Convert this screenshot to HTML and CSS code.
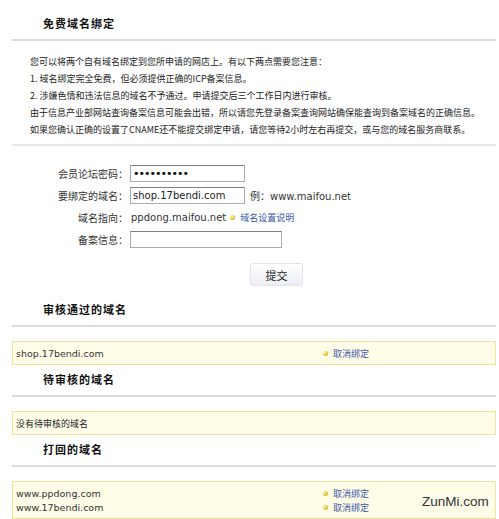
FILE: index.html
```html
<!DOCTYPE html>
<html>
<head>
    <meta charset="UTF-8">
    <title>免费域名绑定</title>
    <link rel="stylesheet" href="styles.css">
</head>
<body>
    <div class="wrap">
        <h2 class="box-title first">免费域名绑定</h2>

        <div class="notice">
            <p>您可以将两个自有域名绑定到您所申请的网店上。有以下两点需要您注意：</p>
            <p>1. 域名绑定完全免费，但必须提供正确的ICP备案信息。</p>
            <p>2. 涉嫌色情和违法信息的域名不予通过。申请提交后三个工作日内进行审核。</p>
            <p>由于信息产业部网站查询备案信息可能会出错，所以请您先登录备案查询网站确保能查询到备案域名的正确信息。</p>
            <p>如果您确认正确的设置了CNAME还不能提交绑定申请，请您等待2小时左右再提交，或与您的域名服务商联系。</p>
        </div>

        <!-- 绑定表单 -->
        <form class="bind-form">
            <div class="row">
                <label>会员论坛密码：</label>
                <input type="password" class="txt pw" value="1234567890">
            </div>
            <div class="row">
                <label>要绑定的域名：</label>
                <input type="text" class="txt" value="shop.17bendi.com">
                <span class="eg">例：www.maifou.net</span>
            </div>
            <div class="row">
                <label>域名指向：</label>
                <span class="cname">ppdong.maifou.net</span>
                <a href="#" class="dot-link">域名设置说明</a>
            </div>
            <div class="row">
                <label>备案信息：</label>
                <input type="text" class="txt long">
            </div>
            <div class="submit-row">
                <button type="button" class="btn">提交</button>
            </div>
        </form>

        <h2 class="box-title">审核通过的域名</h2>
        <div class="domain-list">
            <div class="item"><span class="domain">shop.17bendi.com</span><a href="#" class="dot-link">取消绑定</a></div>
        </div>

        <h2 class="box-title">待审核的域名</h2>
        <div class="domain-list">
            <div class="item"><span class="empty">没有待审核的域名</span></div>
        </div>

        <h2 class="box-title">打回的域名</h2>
        <div class="domain-list">
            <div class="item"><span class="domain">www.ppdong.com</span><a href="#" class="dot-link">取消绑定</a></div>
            <div class="item"><span class="domain">www.17bendi.com</span><a href="#" class="dot-link">取消绑定</a></div>
        </div>
    </div>

    <div class="watermark">ZunMi.com</div>
</body>
</html>
```

FILE: styles.css
```css
/* Общие стили */
body {
  margin: 0;
  position: relative;
  font-family: "DejaVu Sans", "Noto Sans CJK SC", sans-serif;
  color: #222;
  background: #fff;
}

.wrap {
  margin: 0 3px 0 12px;
}

/* Заголовки разделов */
.box-title {
  margin: 0;
  padding: 6px 0 8px 31px;
  font-family: "Noto Sans CJK SC", sans-serif;
  font-size: 11px;
  line-height: 16px;
  letter-spacing: 1px;
  font-weight: bold;
  color: #111;
  border-bottom: 2px solid #dcdcdc;
}

.box-title.first {
  padding-top: 15px;
}

/* Пояснения */
.notice {
  padding: 12px 0 6px 18px;
  border-bottom: 2px solid #e8e8e8;
  font-family: "Noto Sans CJK SC", sans-serif;
  font-size: 9px;
  line-height: 17px;
  color: #222;
}

.notice p {
  margin: 0;
}

/* Форма */
.bind-form {
  padding: 16px 0 9px 0;
}

.row {
  height: 22px;
  display: flex;
  align-items: center;
}

.row label {
  width: 116px;
  text-align: right;
  font-family: "Noto Sans CJK SC", sans-serif;
  font-size: 10px;
  color: #333;
}

.txt {
  box-sizing: border-box;
  width: 115px;
  height: 17px;
  margin: 0 0 0 2px;
  padding: 0 2px;
  border: 1px solid #a5acb5;
  border-top-color: #7c8088;
  font-family: "DejaVu Sans", sans-serif;
  font-size: 10px;
  color: #222;
}

.txt.pw {
  font-size: 11px;
  letter-spacing: -1px;
  color: #000;
}

.txt.long {
  width: 152px;
}

.eg {
  margin-left: 5px;
  font-size: 10px;
  color: #333;
}

.cname {
  margin-left: 3px;
  font-size: 10px;
  color: #333;
}

.row .dot-link {
  margin-left: 4px;
}

.dot-link {
  position: relative;
  padding-left: 10px;
  font-family: "Noto Sans CJK SC", sans-serif;
  font-size: 9px;
  color: #3a58a8;
  text-decoration: none;
}

.dot-link::before {
  content: "";
  position: absolute;
  left: 0;
  top: 50%;
  width: 5px;
  height: 5px;
  margin-top: -2px;
  border-radius: 50%;
  background: radial-gradient(circle at 35% 35%, #fff6b0, #e6c02a 60%, #b8901a);
}

.submit-row {
  margin-top: 13px;
  padding-left: 238px;
}

.btn {
  width: 53px;
  height: 23px;
  padding: 0;
  border: 1px solid #e2e5ee;
  border-radius: 2px;
  background: linear-gradient(#ffffff, #eceef4);
  font-family: "Noto Sans CJK SC", sans-serif;
  font-size: 11px;
  color: #222;
}

/* Списки доменов */
.domain-list {
  margin-top: 14px;
  padding: 4px 0 4px 3px;
  border: 1px solid #efe49a;
  background: #fffce8;
}

.item {
  display: grid;
  grid-template-columns: 307px auto;
  align-items: center;
  height: 14px;
}

.domain {
  font-size: 9.5px;
  color: #333;
}

.empty {
  font-family: "Noto Sans CJK SC", sans-serif;
  font-size: 9px;
  color: #222;
}

/* Водяной знак */
.watermark {
  position: absolute;
  left: 422px;
  top: 494px;
  font-family: "Liberation Sans", sans-serif;
  font-size: 13.5px;
  color: #333;
}
```
